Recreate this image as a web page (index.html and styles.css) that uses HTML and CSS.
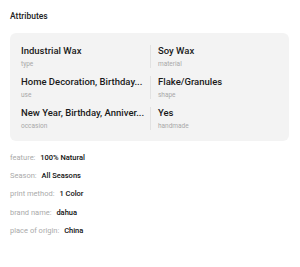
FILE: index.html
```html
<!DOCTYPE html>
<html lang="en">
<head>
    <meta charset="UTF-8">
    <meta name="viewport" content="width=device-width, initial-scale=1.0">
    <title>Attributes</title>
    <link rel="stylesheet" href="styles.css">
</head>
<body>

<div class="container">
    <h2>Attributes</h2>

    <!-- Key attributes -->
    <div class="attr-box">
        <div class="attr">
            <div class="value">Industrial Wax</div>
            <div class="label">type</div>
        </div>
        <div class="attr side">
            <div class="value">Soy Wax</div>
            <div class="label">material</div>
        </div>
        <div class="attr">
            <div class="value">Home Decoration, Birthday...</div>
            <div class="label">use</div>
        </div>
        <div class="attr side">
            <div class="value">Flake/Granules</div>
            <div class="label">shape</div>
        </div>
        <div class="attr">
            <div class="value">New Year, Birthday, Anniver...</div>
            <div class="label">occasion</div>
        </div>
        <div class="attr side">
            <div class="value">Yes</div>
            <div class="label">handmade</div>
        </div>
    </div>

    <!-- Other attributes -->
    <ul class="attr-list">
        <li><span class="key">feature:</span> <span class="val">100% Natural</span></li>
        <li><span class="key">Season:</span> <span class="val">All Seasons</span></li>
        <li><span class="key">print method:</span> <span class="val">1 Color</span></li>
        <li><span class="key">brand name:</span> <span class="val">dahua</span></li>
        <li><span class="key">place of origin:</span> <span class="val">China</span></li>
    </ul>
</div>

</body>
</html>
```

FILE: styles.css
```css
* {
    margin: 0;
    padding: 0;
    box-sizing: border-box;
}
body {
    font-family: Roboto, "Noto Sans", sans-serif;
    background-color: #fff;
    color: #222;
}
.container {
    padding: 10px 11px 0 10px;
}
h2 {
    font-size: 8.5px;
    font-weight: 500;
    line-height: 12px;
    margin-bottom: 11px;
}
.attr-box {
    display: grid;
    grid-template-columns: 129px 1fr;
    row-gap: 8px;
    padding: 12px 11px 11px 11px;
    background-color: #f3f3f3;
    border-radius: 6px;
}
.attr {
    min-width: 0;
    padding-right: 8px;
}
.attr.side {
    border-left: 1px solid #e2e2e2;
    padding-left: 7px;
}
.value {
    font-size: 9.5px;
    font-weight: 500;
    line-height: 12px;
    white-space: nowrap;
    color: #1a1a1a;
}
.label {
    font-size: 6.5px;
    color: #a8a8a8;
    line-height: 8px;
    margin-top: 3px;
}
.attr-list {
    list-style: none;
    margin-top: 12px;
}
.attr-list li {
    font-size: 7.5px;
    line-height: 10px;
    margin-bottom: 8.2px;
}
.key {
    color: #aaa;
    margin-right: 3px;
}
.val {
    color: #111;
    font-weight: 500;
}
```
